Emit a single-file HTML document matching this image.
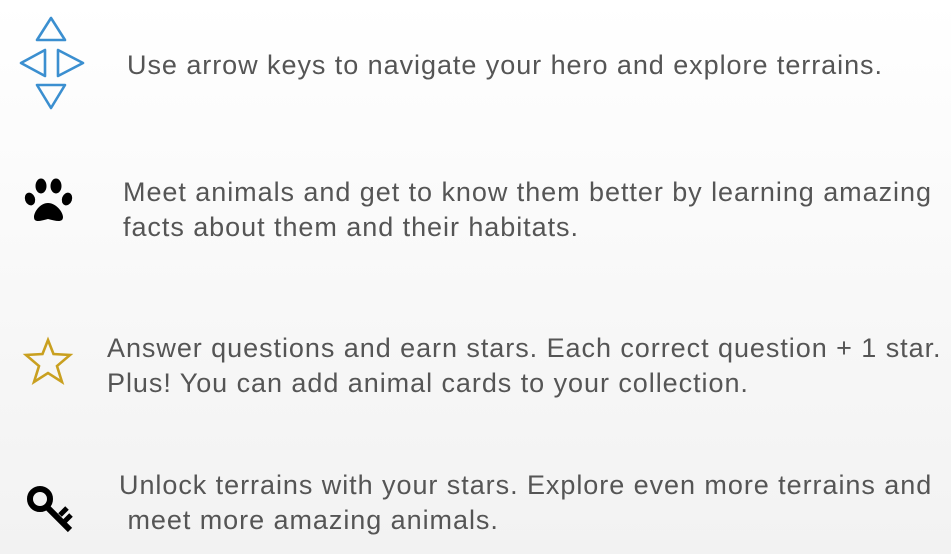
<!DOCTYPE html>
<html><head><style>
body{margin:0;width:951px;height:554px;overflow:hidden;background:linear-gradient(#fff,#f2f2f2);font-family:"Liberation Sans",sans-serif;color:#555;font-size:27px;letter-spacing:0.95px;position:relative}
.t{position:absolute;line-height:35px;white-space:nowrap}
svg{position:absolute;left:0;top:0}
</style></head><body>
<svg width="951" height="554">
<g fill="none" stroke="#3b8fd0" stroke-width="2.6" stroke-linejoin="round">
<path d="M51 18 L37 40 L65 40 Z"/>
<path d="M21 63 L45 50 L45 76 Z"/>
<path d="M83 63 L58 50 L58 76 Z"/>
<path d="M51 108 L37 85 L65 85 Z"/>
</g>
<g fill="#000">
<ellipse cx="41" cy="186" rx="5.5" ry="7.5"/>
<ellipse cx="56" cy="186" rx="5.5" ry="7.5"/>
<ellipse cx="30" cy="199" rx="5" ry="6.5" transform="rotate(-20 30 199)"/>
<ellipse cx="67" cy="199" rx="5" ry="6.5" transform="rotate(20 67 199)"/>
<path d="M48 203 C40 203 34 212 34 217 C34 223 40 221 48 219 C56 221 63 223 63 217 C63 212 56 203 48 203 Z"/>
</g>
<path d="M48 340 L53.5 354 L70 355 L57 366 L62 382 L48 373 L34 382 L39 366 L26 355 L42.5 354 Z" fill="none" stroke="#c9a020" stroke-width="2.6" stroke-linejoin="miter"/>
<g>
<circle cx="40" cy="499" r="10" fill="none" stroke="#000" stroke-width="6"/>
<path d="M46 506 L70 530" stroke="#000" stroke-width="6"/>
<path d="M60 515 L67 508 M65 521 L71 515" stroke="#000" stroke-width="5"/>
</g>
</svg>
<div class="t" style="left:127px;top:48px">Use arrow keys to navigate your hero and explore terrains.</div>
<div class="t" style="left:123px;top:175px">Meet animals and get to know them better by learning amazing<br>facts about them and their habitats.</div>
<div class="t" style="left:107px;top:331px">Answer questions and earn stars. Each correct question + 1 star.<br>Plus! You can add animal cards to your collection.</div>
<div class="t" style="left:119px;top:468px">Unlock terrains with your stars. Explore even more terrains and<br>&nbsp;meet more amazing animals.</div>
</body></html>
